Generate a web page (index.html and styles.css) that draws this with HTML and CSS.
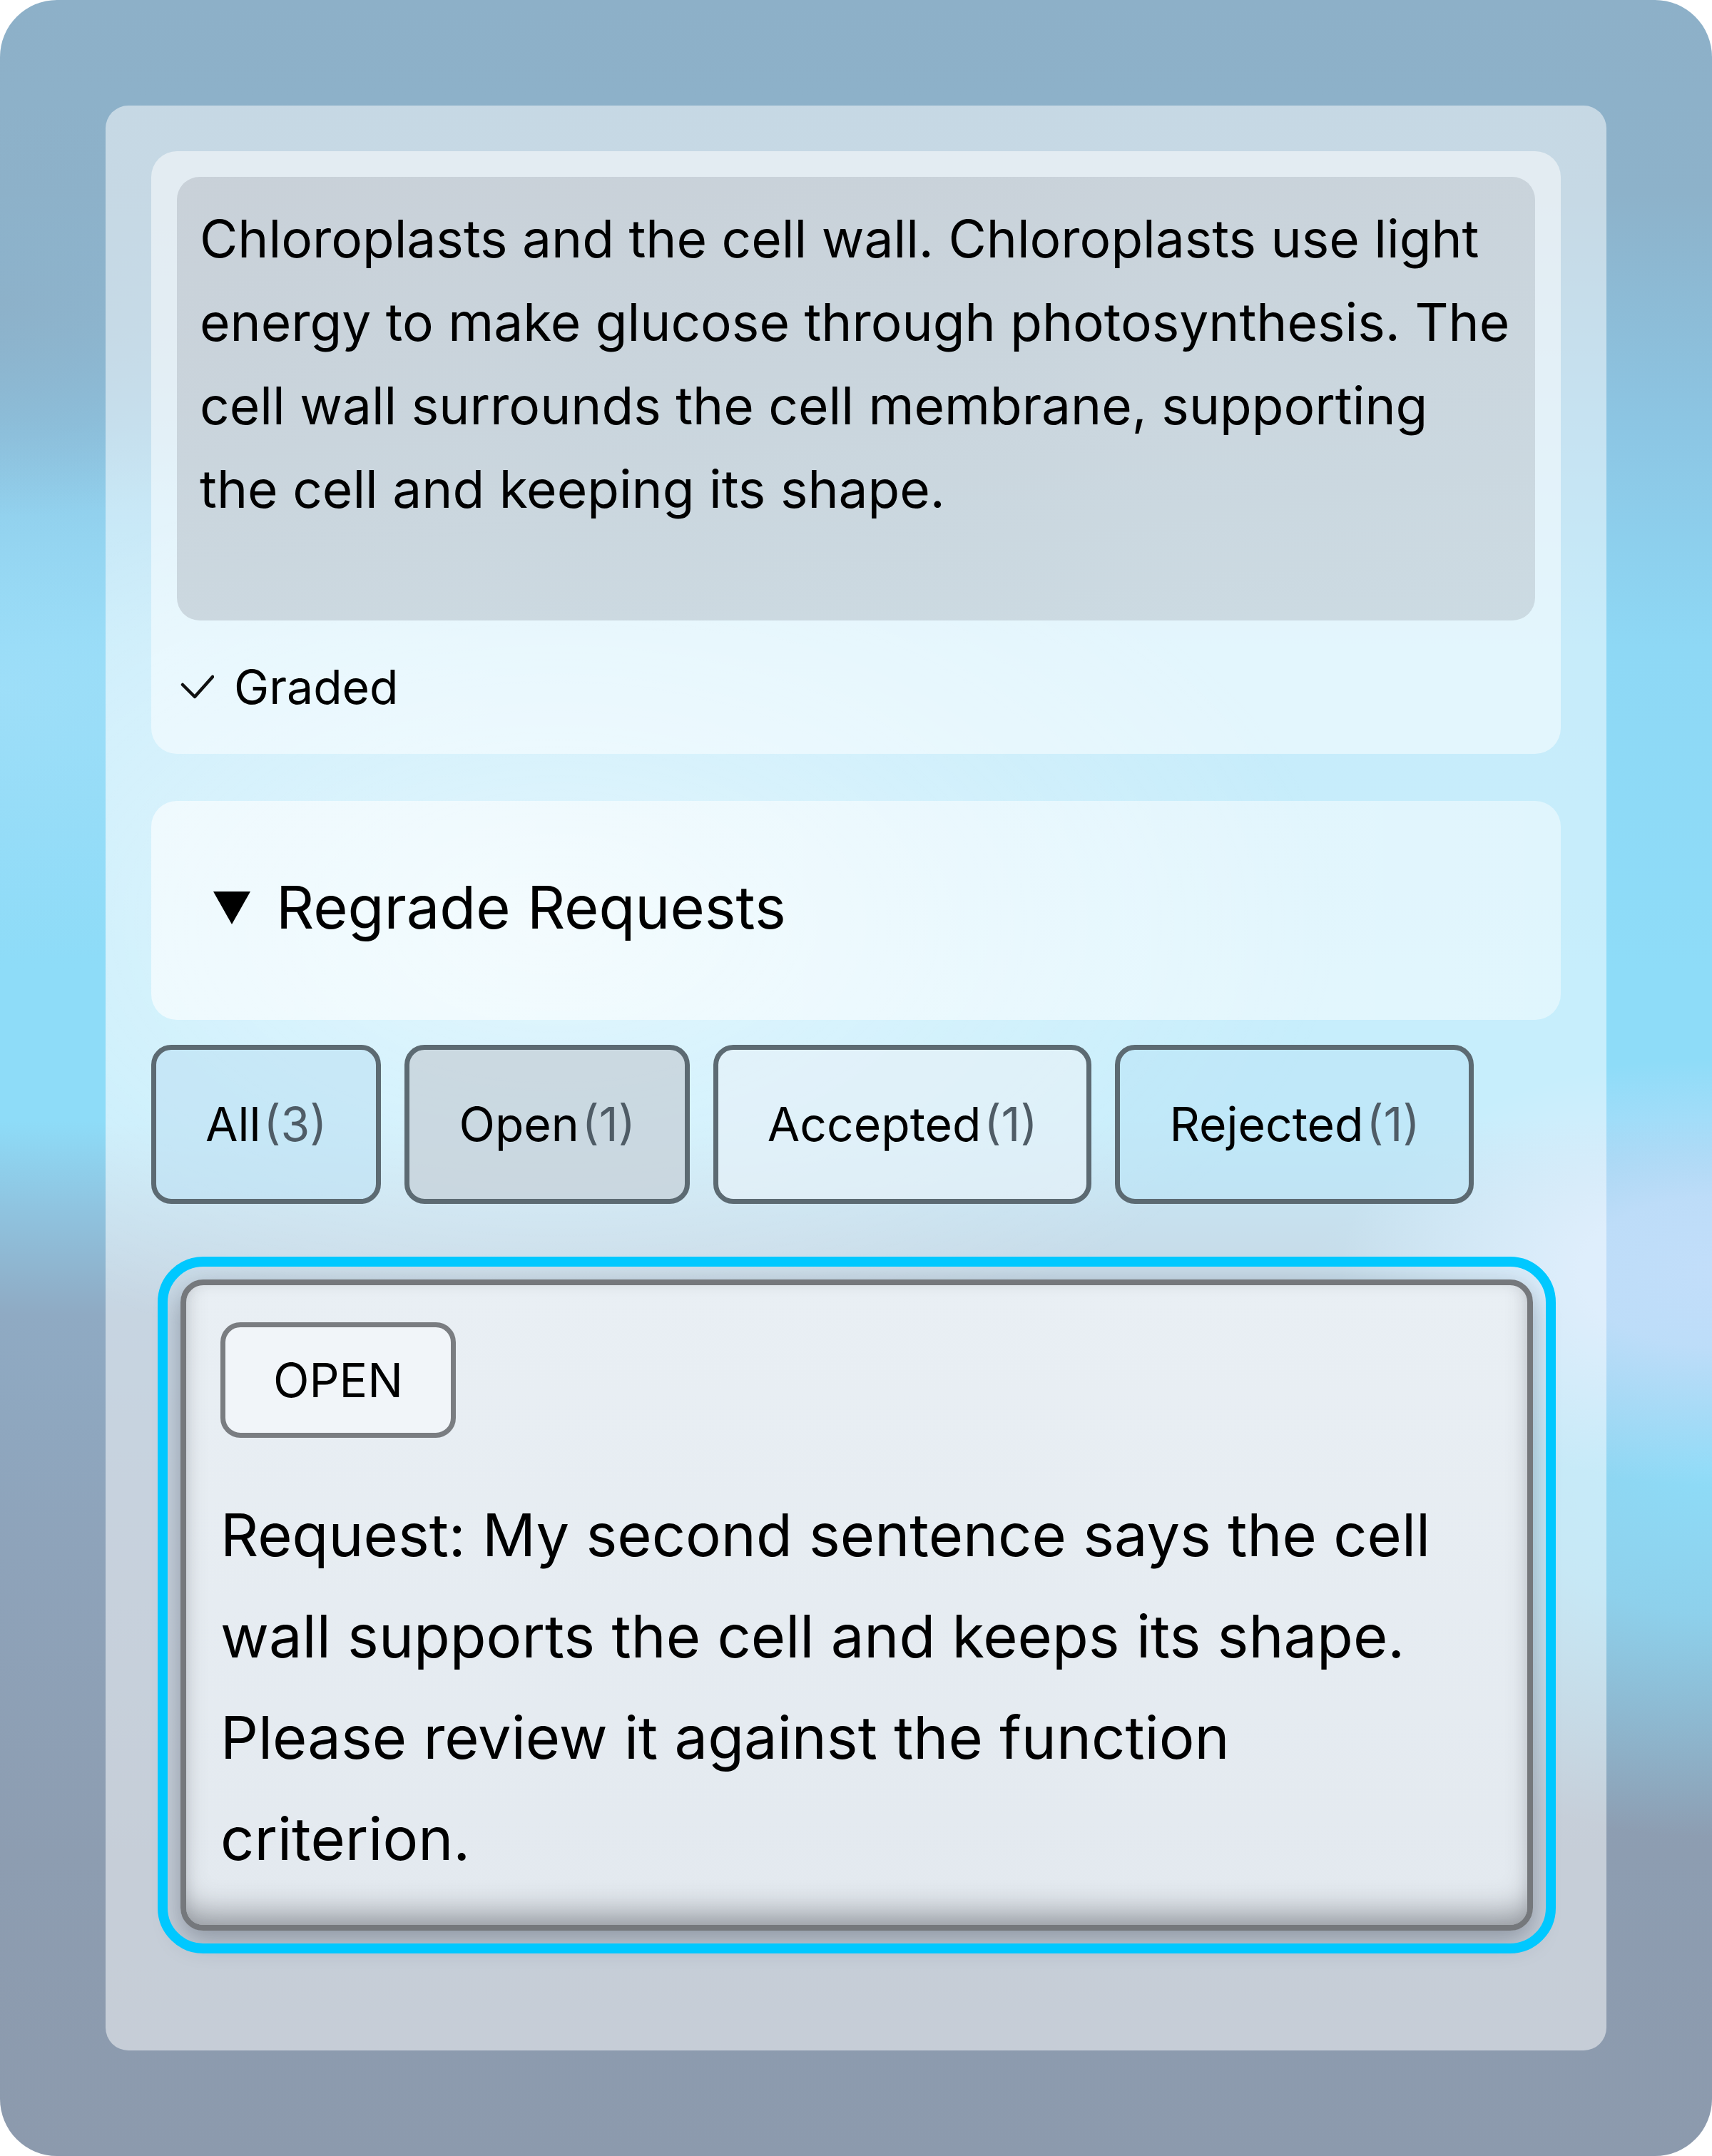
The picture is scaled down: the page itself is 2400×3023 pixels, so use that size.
FILE: index.html
```html
<!DOCTYPE html>
<html lang="en">
<head>
<meta charset="utf-8">
<title>Regrade Requests</title>
<link rel="stylesheet" href="styles.css">
</head>
<body>
<div class="frame">
  <main class="panel">
    <section class="card answer">
      <div class="answer-text">Chloroplasts and the cell wall. Chloroplasts use light energy to make glucose through photosynthesis. The cell wall surrounds the cell membrane, supporting the cell and keeping its shape.</div>
      <div class="status">
        <svg class="check" width="48" height="48" viewBox="0 0 48 48" aria-hidden="true"><polyline points="4,20 21,37 46,9" fill="none" stroke="#111" stroke-width="4.5" stroke-linecap="round" stroke-linejoin="round"/></svg>
        <span>Graded</span>
      </div>
    </section>

    <section class="card regrade">
      <svg class="disclosure" width="52" height="46" viewBox="0 0 52 46" aria-hidden="true"><polygon points="0,0 52,0 26,46" fill="#000"/></svg>
      <h2 class="regrade-title">Regrade Requests</h2>
    </section>

    <nav class="filters">
      <button class="filter f-all"><span>All</span><span class="count">(3)</span></button>
      <button class="filter f-open"><span>Open</span><span class="count">(1)</span></button>
      <button class="filter f-accepted"><span>Accepted</span><span class="count">(1)</span></button>
      <button class="filter f-rejected"><span>Rejected</span><span class="count">(1)</span></button>
    </nav>

    <div class="requests">
      <article class="request">
        <span class="badge">OPEN</span>
        <p class="request-text">Request: My second sentence says the cell wall supports the cell and keeps its shape. Please review it against the function criterion.</p>
      </article>
    </div>
  </main>
</div>
</body>
</html>
```

FILE: styles.css
```css
html, body {
  margin: 0;
  padding: 0;
  background: #ffffff;
}

body {
  font-family: Inter, "Noto Sans", "Liberation Sans", sans-serif;
  color: #000;
}

.frame {
  width: 2400px;
  height: 3023px;
  box-sizing: border-box;
  padding: 148px;
  border-radius: 80px;
  overflow: hidden;
  background:
    radial-gradient(ellipse 520px 300px at 100% 59%, rgba(194, 222, 250, 1) 0%, rgba(194, 222, 250, 0.9) 35%, rgba(194, 222, 250, 0) 100%),
    radial-gradient(ellipse 700px 520px at 100% 68%, rgba(142, 220, 248, 1) 0%, rgba(142, 220, 248, 0.8) 40%, rgba(142, 220, 248, 0) 100%),
    radial-gradient(ellipse 600px 300px at 0% 14%, rgba(141, 176, 200, 0.9) 0%, rgba(141, 176, 200, 0) 100%),
    radial-gradient(ellipse 700px 380px at 0% 32%, rgba(168, 226, 250, 0.6) 0%, rgba(168, 226, 250, 0) 100%),
    linear-gradient(180deg, #8db0c8 0%, #8db2ca 9%, #8cc6e4 20%, #8ed8f5 30%, #8edcf8 45%, #8edcf8 52%, #8fc4e0 56%, #8faac3 61%, #8ea3ba 72%, #8d9db1 86%, #8c9aad 100%);
}

.panel {
  box-sizing: border-box;
  height: 100%;
  padding: 64px 64px 170px;
  border-radius: 32px;
  display: flex;
  flex-direction: column;
  background:
    radial-gradient(ellipse 1100px 650px at 30% 42%, rgba(255, 255, 255, 0.5), rgba(255, 255, 255, 0)),
    rgba(255, 255, 255, 0.5);
}

.card {
  border-radius: 36px;
  background: rgba(255, 255, 255, 0.5);
}

.answer {
  padding: 36px;
  display: flex;
  flex-direction: column;
  gap: 36px;
  margin-bottom: 66px;
}

.answer-text {
  height: 622px;
  box-sizing: border-box;
  padding: 28px 26px 28px 32px;
  border-radius: 32px;
  background: linear-gradient(170deg, rgba(196, 204, 212, 0.85), rgba(198, 212, 220, 0.8));
  font-size: 73px;
  line-height: 117px;
}

.status {
  display: flex;
  align-items: center;
  gap: 28px;
  padding-left: 4px;
  font-size: 66px;
  line-height: 115px;
}

.check {
  display: block;
  flex: none;
}

.regrade {
  display: flex;
  align-items: center;
  gap: 36px;
  padding: 101px 87px 109px;
  margin-bottom: 35px;
  background: linear-gradient(90deg, rgba(255, 255, 255, 0.62), rgba(255, 255, 255, 0.45));
}

.disclosure {
  display: block;
  flex: none;
}

.regrade-title {
  margin: 0;
  font-size: 83px;
  font-weight: 400;
  line-height: 97px;
}

.filters {
  display: flex;
  gap: 33px;
  margin-bottom: 106px;
}

.filter {
  font: inherit;
  font-size: 66px;
  line-height: 115px;
  color: #000;
  padding: 47px 69px;
  border: 7px solid #5c6a72;
  border-radius: 28px;
  display: flex;
  align-items: baseline;
}

.filter .count {
  color: #4f5c66;
  margin-left: 4px;
}

.f-all { background: rgba(190, 225, 244, 0.6); }
.f-open { background: rgba(200, 212, 220, 0.85); }
.f-accepted { background: rgba(230, 241, 248, 0.7); }
.f-rejected { background: rgba(186, 228, 246, 0.55); }

.requests {
  padding: 0 39px 0 41px;
}

.request {
  border: 8px solid #75787c;
  border-radius: 32px;
  padding: 52px 48px 50px;
  outline: 14px solid #00c8ff;
  outline-offset: 18px;
  background: linear-gradient(180deg, #e9eff4 0%, #e3e9ef 100%);
  box-shadow:
    inset 0 -32px 40px -14px rgba(70, 74, 80, 0.45),
    inset 0 0 18px rgba(60, 70, 80, 0.10),
    0 14px 36px rgba(40, 50, 66, 0.35);
}

.badge {
  display: inline-block;
  padding: 34px 67px;
  border: 7px solid #7a7d81;
  border-radius: 28px;
  background: #f1f5f9;
  font-size: 66px;
  line-height: normal;
  margin-bottom: 65px;
}

.request-text {
  margin: 0;
  max-width: 1740px;
  font-size: 83px;
  line-height: 142px;
}
```
